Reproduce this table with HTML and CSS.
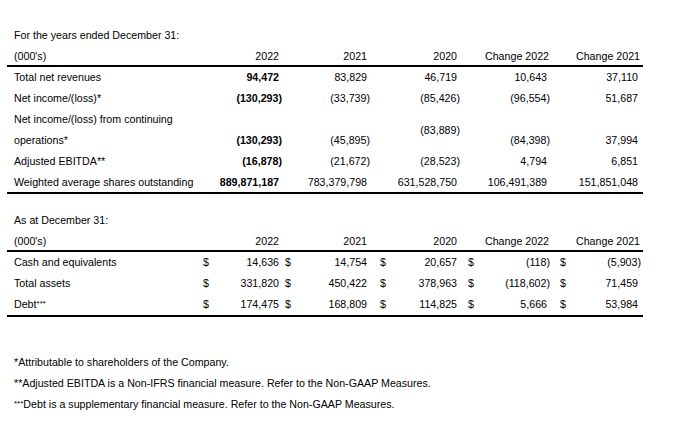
FILE: index.html
```html
<!DOCTYPE html>
<html lang="en">
<head>
<meta charset="utf-8">
<title>Financial Highlights</title>
<link rel="stylesheet" href="styles.css">
</head>
<body>
<main class="page">
  <section class="tbl years" aria-label="For the years ended December 31">
    <div class="row title"><div class="label">For the years ended December 31:</div></div>
    <div class="row head">
      <div class="label">(000's)</div>
      <div class="num">2022</div>
      <div class="num">2021</div>
      <div class="num">2020</div>
      <div class="num"><span class="chg">Change 2022</span></div>
      <div class="num last"><span class="chg">Change 2021</span></div>
    </div>
    <div class="row">
      <div class="label">Total net revenues</div>
      <div class="num b">94,472</div>
      <div class="num">83,829</div>
      <div class="num">46,719</div>
      <div class="num">10,643</div>
      <div class="num last">37,110</div>
    </div>
    <div class="row">
      <div class="label">Net income/(loss)*</div>
      <div class="num b"><span class="neg">(130,293)</span></div>
      <div class="num"><span class="neg">(33,739)</span></div>
      <div class="num"><span class="neg">(85,426)</span></div>
      <div class="num"><span class="neg">(96,554)</span></div>
      <div class="num last">51,687</div>
    </div>
    <div class="row tall">
      <div class="label">Net income/(loss) from continuing operations*</div>
      <div class="num b"><span class="neg">(130,293)</span></div>
      <div class="num"><span class="neg">(45,895)</span></div>
      <div class="num mid"><span class="neg">(83,889)</span></div>
      <div class="num"><span class="neg">(84,398)</span></div>
      <div class="num last">37,994</div>
    </div>
    <div class="row">
      <div class="label">Adjusted EBITDA**</div>
      <div class="num b"><span class="neg">(16,878)</span></div>
      <div class="num"><span class="neg">(21,672)</span></div>
      <div class="num"><span class="neg">(28,523)</span></div>
      <div class="num">4,794</div>
      <div class="num last">6,851</div>
    </div>
    <div class="row end">
      <div class="label">Weighted average shares outstanding</div>
      <div class="num b">889,871,187</div>
      <div class="num">783,379,798</div>
      <div class="num">631,528,750</div>
      <div class="num">106,491,389</div>
      <div class="num last">151,851,048</div>
    </div>
  </section>

  <section class="tbl at" aria-label="As at December 31">
    <div class="row title"><div class="label">As at December 31:</div></div>
    <div class="row head">
      <div class="label">(000's)</div>
      <div></div><div class="num">2022</div>
      <div></div><div class="num">2021</div>
      <div></div><div class="num">2020</div>
      <div></div><div class="num"><span class="chg">Change 2022</span></div>
      <div></div><div class="num last"><span class="chg">Change 2021</span></div>
    </div>
    <div class="row">
      <div class="label">Cash and equivalents</div>
      <div class="cur c1">$</div><div class="num">14,636</div>
      <div class="cur c2">$</div><div class="num">14,754</div>
      <div class="cur c3">$</div><div class="num">20,657</div>
      <div class="cur c4">$</div><div class="num"><span class="neg">(118)</span></div>
      <div class="cur c5">$</div><div class="num last"><span class="neg">(5,903)</span></div>
    </div>
    <div class="row">
      <div class="label">Total assets</div>
      <div class="cur c1">$</div><div class="num">331,820</div>
      <div class="cur c2">$</div><div class="num">450,422</div>
      <div class="cur c3">$</div><div class="num">378,963</div>
      <div class="cur c4">$</div><div class="num"><span class="neg">(118,602)</span></div>
      <div class="cur c5">$</div><div class="num last">71,459</div>
    </div>
    <div class="row end">
      <div class="label">Debt<span class="sm">***</span></div>
      <div class="cur c1">$</div><div class="num">174,475</div>
      <div class="cur c2">$</div><div class="num">168,809</div>
      <div class="cur c3">$</div><div class="num">114,825</div>
      <div class="cur c4">$</div><div class="num">5,666</div>
      <div class="cur c5">$</div><div class="num last">53,984</div>
    </div>
  </section>

  <div class="notes">
    <p>*Attributable to shareholders of the Company.</p>
    <p>**Adjusted EBITDA is a Non-IFRS financial measure. Refer to the Non-GAAP Measures.</p>
    <p><span class="sm">***</span>Debt is a supplementary financial measure. Refer to the Non-GAAP Measures.</p>
  </div>
</main>
</body>
</html>
```

FILE: styles.css
```css
html, body {
  margin: 0;
  padding: 0;
  background: #fff;
}

body {
  font-family: "Liberation Sans", Arial, sans-serif;
  font-size: 10.667px;
  color: #000;
}

*, *::before, *::after {
  box-sizing: border-box;
}

.page {
  padding: 25px 0 0 7px;
  display: flex;
  flex-direction: column;
  align-items: flex-start;
}

.tbl {
  width: 636px;
  display: flex;
  flex-direction: column;
}

.tbl.at {
  margin-top: 16px;
}

.row {
  display: grid;
  height: 21px;
  line-height: 21px;
  white-space: nowrap;
}

.years .row {
  grid-template-columns: 193px 79px 88px 90px 90px 96px;
}

.at .row {
  grid-template-columns: 193px 10px 69px 16px 72px 20px 70px 18px 72px 20px 76px;
}

.row.title {
  display: block;
}

.row.head {
  border-bottom: 2px solid #000;
}

.years .row.end {
  height: 22px;
  border-bottom: 2px solid #000;
}

.at .row.end {
  height: 23px;
  border-bottom: 2px solid #000;
}

.row.tall {
  height: 42px;
}

.row > div {
  align-self: start;
}

.row.tall > div {
  align-self: end;
}

.row.tall > div.mid {
  align-self: center;
}

.label {
  padding-left: 7px;
  text-align: left;
  white-space: normal;
}

.num {
  text-align: right;
}

.num.last {
  padding-right: 5px;
}

.b {
  font-weight: bold;
}

.neg {
  margin-right: -3px;
}

.chg {
  margin-right: -2px;
}

.sm {
  font-size: 8px;
  vertical-align: 2px;
  line-height: 0;
}

.cur { text-align: left; }
.c1 { padding-left: 3px; }
.c2 { padding-left: 6px; }
.c3 { padding-left: 13px; }
.c4 { padding-left: 11px; }
.c5 { padding-left: 13px; }

.notes {
  margin-top: 35px;
  padding-left: 7px;
}

.notes p {
  margin: 0;
  line-height: 21px;
}
```
